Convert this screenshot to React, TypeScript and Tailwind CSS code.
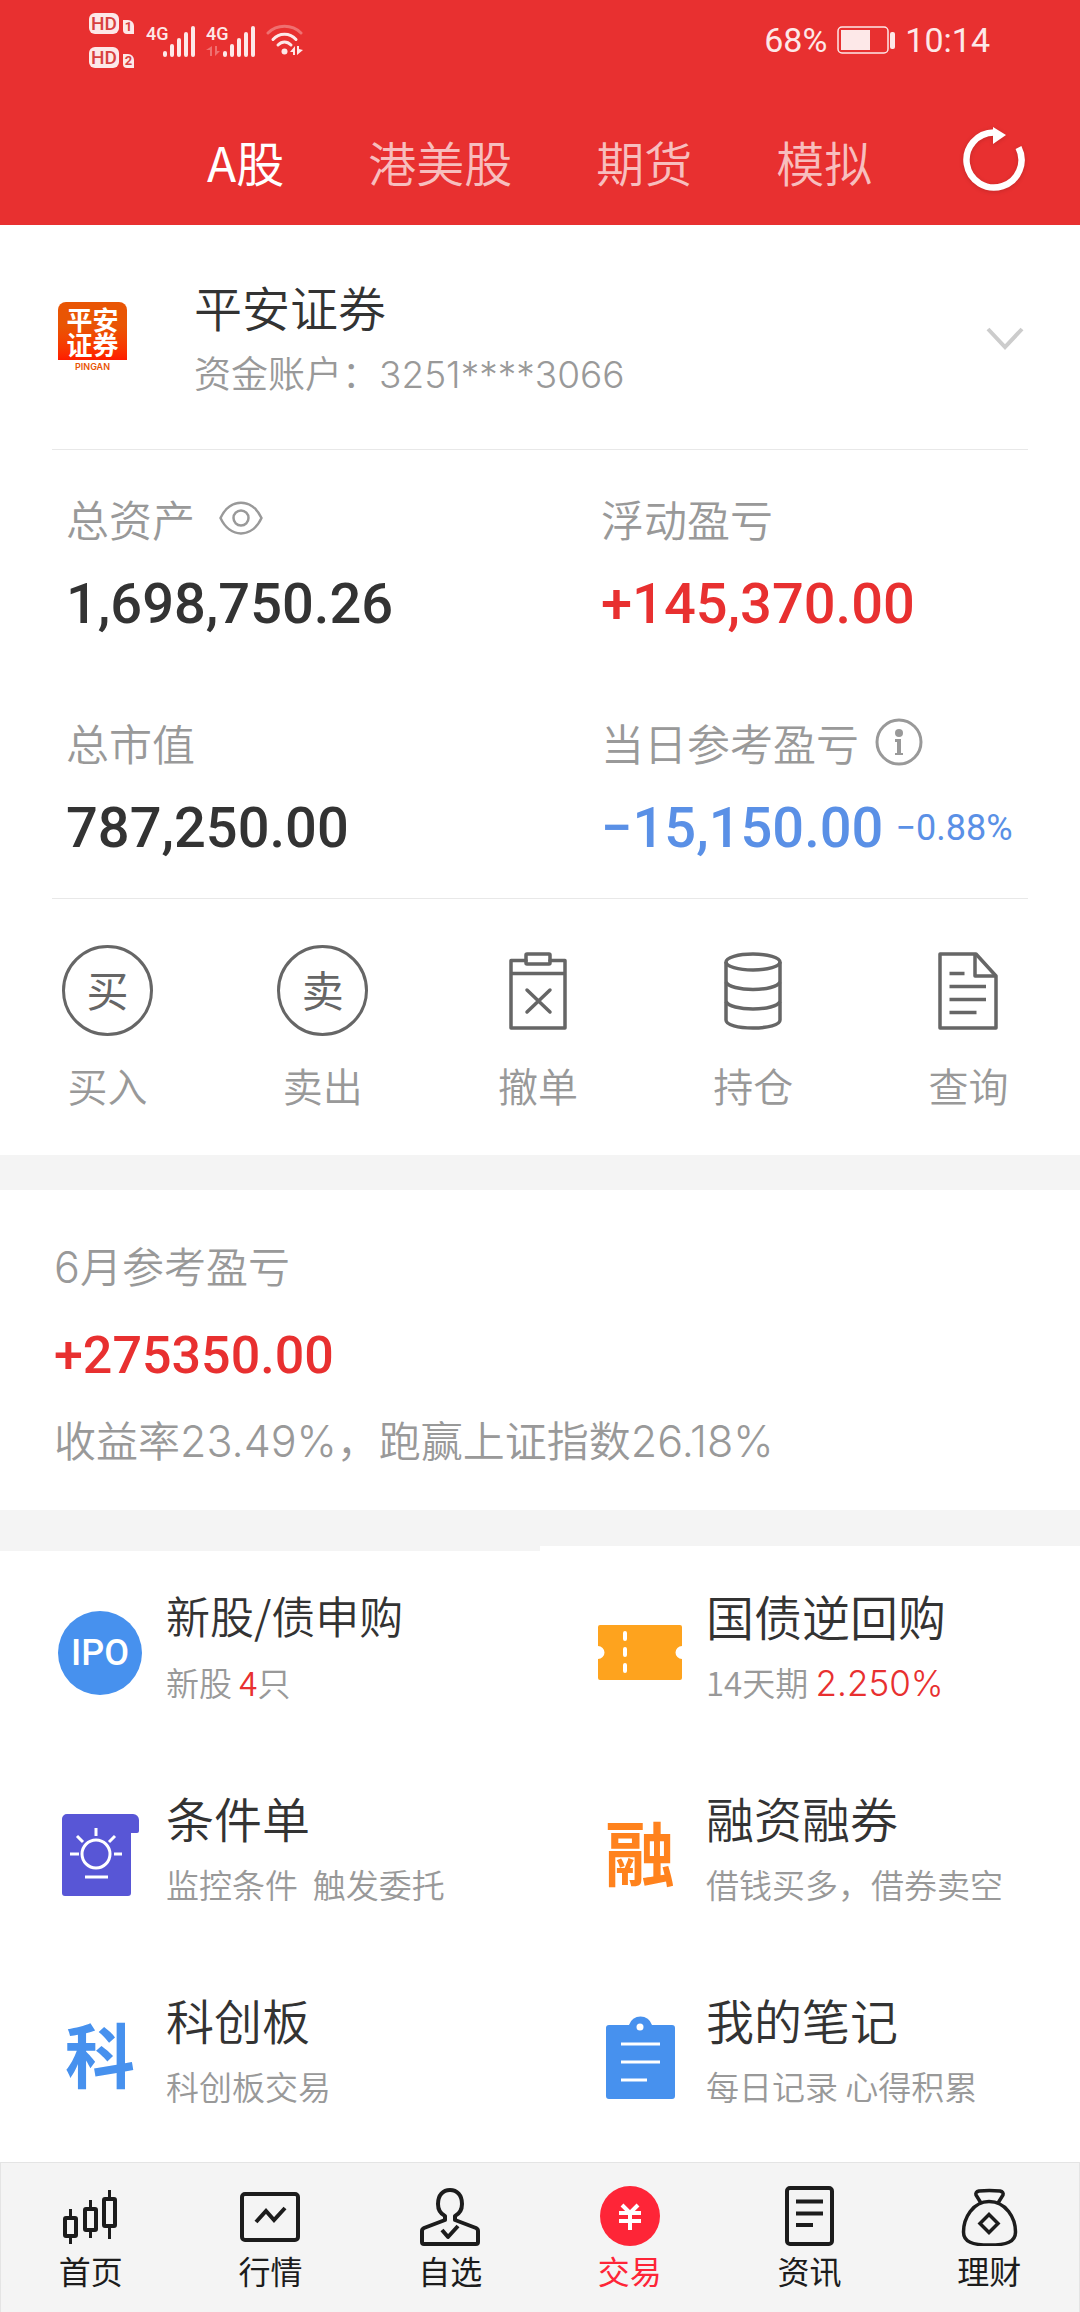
import type { ReactNode } from "react";

const quickActions: { label: string; icon: ReactNode }[] = [
  { label: "买入", icon: <CircleIcon char="买" /> },
  { label: "卖出", icon: <CircleIcon char="卖" /> },
  { label: "撤单", icon: <CancelIcon /> },
  { label: "持仓", icon: <PositionIcon /> },
  { label: "查询", icon: <QueryIcon /> },
];

const navItems: { label: string; icon: ReactNode; active?: boolean }[] = [
  { label: "首页", icon: <CandlesIcon /> },
  { label: "行情", icon: <QuoteIcon /> },
  { label: "自选", icon: <PersonIcon /> },
  { label: "交易", icon: <TradeIcon />, active: true },
  { label: "资讯", icon: <NewsIcon /> },
  { label: "理财", icon: <BagIcon /> },
];

/* Status bar */

function HdBadge({ sim }: { sim: string }) {
  return (
    <div className="flex items-end gap-1">
      <span className="flex h-[21px] w-[30px] items-center justify-center rounded-md bg-[#fde8e8] font-[Roboto] text-[19px] leading-none font-medium text-[#d8403f]">
        HD
      </span>
      <span className="flex h-[14px] w-[11px] items-center justify-center rounded-tr-md rounded-bl-sm bg-[#fde8e8] font-[Roboto] text-[13px] leading-none font-bold text-[#d8403f]">
        {sim}
      </span>
    </div>
  );
}

function Signal({ arrows }: { arrows?: boolean }) {
  return (
    <svg width="52" height="34" viewBox="0 0 52 34" fill="#fde8e8">
      <text x="0" y="17" fontFamily="Roboto" fontSize="18" fontWeight="500">
        4G
      </text>
      {arrows && <path d="M6 23v10H4v-6H0zM9 23v10l5-5h-3v-5z" opacity="0.35" />}
      <rect x="17" y="28" width="4" height="6" rx="2" />
      <rect x="24" y="21" width="4" height="13" rx="2" />
      <rect x="31" y="15" width="4" height="19" rx="2" />
      <rect x="38" y="9" width="4" height="25" rx="2" />
      <rect x="45" y="3" width="4" height="31" rx="2" />
    </svg>
  );
}

function WifiIcon() {
  return (
    <svg width="38" height="32" viewBox="0 0 38 32" fill="none" stroke="#fde8e8" strokeWidth="3" strokeLinecap="round">
      <path d="M2 9C11 0 26 0 35 9" opacity="0.35" />
      <path d="M7 15.5c6-7 17-7 23 0" />
      <path d="M12 21c4-4 9-4 13 0" />
      <circle cx="18.5" cy="27.5" r="3" fill="#fde8e8" stroke="none" />
      <path d="M29 22v9h-2v-3h-3zM31 22v9l6-5-4-1v-3z" fill="#fde8e8" stroke="none" />
    </svg>
  );
}

function BatteryIcon() {
  return (
    <svg width="58" height="28" viewBox="0 0 58 28" fill="#fde8e8">
      <rect x="1" y="1" width="50" height="26" rx="4" fill="none" stroke="#fde8e8" strokeWidth="1.5" />
      <rect x="4" y="4" width="29" height="20" />
      <rect x="53" y="6" width="5" height="17" rx="2" />
    </svg>
  );
}

function StatusBar() {
  return (
    <div className="flex h-20 items-center pr-[90px] pl-[89px] text-[#fde8e8]">
      <div className="flex flex-col gap-[13px]">
        <HdBadge sim="1" />
        <HdBadge sim="2" />
      </div>
      <div className="ml-3 flex items-center gap-2">
        <Signal />
        <Signal arrows />
        <WifiIcon />
      </div>
      <div className="ml-auto flex items-center gap-[10px] font-[Roboto] text-[34px] font-normal">
        <span>68%</span>
        <BatteryIcon />
        <span>10:14</span>
      </div>
    </div>
  );
}

/* Small icons */

function RefreshIcon() {
  return (
    <svg width="68" height="72" viewBox="0 3 68 72" className="drop-shadow-sm">
      <path d="M34 10.5A27.5 27.5 0 1 0 58.5 25.5" fill="none" stroke="#fff" strokeWidth="6.5" />
      <path d="M33 5l13 8-13 9z" fill="#fff" />
    </svg>
  );
}

function BrokerLogo() {
  return (
    <div className="flex w-[69px] shrink-0 flex-col items-center pb-1">
      <div className="flex h-[58px] w-full items-center justify-center rounded-t-lg bg-linear-to-b from-[#e95504] from-40% to-[#ff1a00] text-center text-[26px] leading-[25px] font-bold text-white">
        平安
        <br />
        证券
      </div>
      <span className="pt-[2px] font-[Inter] text-[9px] leading-[10px] font-semibold text-[#e95504]">PINGAN</span>
    </div>
  );
}

function EyeIcon() {
  return (
    <svg width="44" height="34" viewBox="0 0 44 34" fill="none" stroke="#999" strokeWidth="2.5">
      <path d="M1.5 17C11-3.5 33-3.5 42.5 17 33 37.5 11 37.5 1.5 17z" strokeLinejoin="round" />
      <circle cx="22" cy="17" r="7.5" />
    </svg>
  );
}

function InfoIcon() {
  return (
    <svg width="48" height="48" viewBox="0 0 48 48">
      <circle cx="24" cy="24" r="22" fill="none" stroke="#999" strokeWidth="3" />
      <circle cx="24" cy="15" r="4" fill="#999" />
      <path d="M20 21h6v14h2v2h-8v-2h2V24h-2z" fill="#999" />
    </svg>
  );
}

/* Action icons */

function CircleIcon({ char }: { char: string }) {
  return (
    <span className="flex size-[91px] items-center justify-center rounded-full border-[3px] border-[#666] pb-1 text-[42px] leading-none font-normal text-[#666]">
      {char}
    </span>
  );
}

function CancelIcon() {
  return (
    <svg width="58" height="78" viewBox="0 0 58 78" fill="none" stroke="#666" strokeWidth="3.5" strokeLinejoin="round" strokeLinecap="round">
      <path d="M17 8.5H2v67.5h54V8.5H41M2 21.5h54" />
      <rect x="17" y="2" width="24" height="10" rx="1" />
      <path d="M18 38l23 22M41 38L18 60" />
    </svg>
  );
}

function PositionIcon() {
  return (
    <svg width="58" height="78" viewBox="0 0 58 78" fill="none" stroke="#666" strokeWidth="3.5">
      <ellipse cx="29" cy="10" rx="27" ry="8" />
      <path d="M2 10v58c0 5 12 8 27 8s27-3 27-8V10" />
      <path d="M2 30c2 4.5 14 7.5 27 7.5S54 34.5 56 30M2 49.5C4 54 16 57 29 57s25-3 27-7.5" />
    </svg>
  );
}

function QueryIcon() {
  return (
    <svg width="60" height="78" viewBox="0 0 60 78" fill="none" stroke="#666" strokeWidth="3.5" strokeLinejoin="round">
      <path d="M2 2h36l20 22v52H2z" />
      <path d="M37 2v22h21" />
      <path d="M11.5 21.5h15M11.5 34.5H48M11.5 47.5H48M11.5 60.5h27" />
    </svg>
  );
}

/* Feature icons */

function IpoIcon() {
  return (
    <span className="flex size-[84px] items-center justify-center rounded-full bg-[#4791ee] font-[Roboto] text-[36px] font-medium text-white">
      IPO
    </span>
  );
}

function TicketIcon() {
  return (
    <svg width="84" height="84" viewBox="0 0 84 84">
      <path d="M2 14h80a2 2 0 0 1 2 2v19a6.5 6.5 0 0 0 0 13v19a2 2 0 0 1-2 2H2a2 2 0 0 1-2-2V48a6.5 6.5 0 0 0 0-13V16a2 2 0 0 1 2-2z" fill="#fea31e" />
      <path d="M27 22v6M27 38v6M27 54v6" stroke="#fff" strokeWidth="4" strokeLinecap="round" />
    </svg>
  );
}

function ConditionIcon() {
  return (
    <svg width="84" height="84" viewBox="0 0 84 84">
      <path d="M9 1h66a6 6 0 0 1 6 6v11a2 2 0 0 1-2 2h-6v60a3 3 0 0 1-3 3H7a3 3 0 0 1-3-3V6a5 5 0 0 1 5-5z" fill="#5856d6" />
      <g fill="none" stroke="#fff" strokeWidth="3">
        <circle cx="38" cy="41" r="14" />
        <path d="M38 15v8M12 41h9M56 41h8M19 23l6 6M57 23l-6 6M27 64h23" />
      </g>
    </svg>
  );
}

function CharIcon({ char, color }: { char: string; color: string }) {
  return (
    <span className={`flex size-[84px] items-center justify-center pb-2 text-[70px] leading-none font-bold ${color}`}>
      {char}
    </span>
  );
}

function NotesIcon() {
  return (
    <svg width="84" height="84" viewBox="0 0 84 84">
      <path d="M11 10h20a12 12 0 0 1 23 0h20a3 3 0 0 1 3 3v68a3 3 0 0 1-3 3H11a3 3 0 0 1-3-3V13a3 3 0 0 1 3-3z" fill="#4791ee" />
      <circle cx="42" cy="12" r="3.5" fill="#fff" />
      <path d="M23 29h39M23 47h39M23 65h26" stroke="#fff" strokeWidth="3" />
    </svg>
  );
}

/* Bottom bar icons */

function CandlesIcon() {
  return (
    <svg width="60" height="60" viewBox="0 0 60 60" fill="none" stroke="#1c1c1c" strokeWidth="4">
      <rect x="4" y="32" width="11" height="18" rx="1" />
      <rect x="24" y="23" width="11" height="21" rx="1" />
      <rect x="43" y="13" width="11" height="27" rx="1" />
      <path d="M9.5 23v8M9.5 50v8M29.5 14v8M29.5 44v8M48.5 4v9M48.5 40v13" strokeWidth="3" />
    </svg>
  );
}

function QuoteIcon() {
  return (
    <svg width="60" height="60" viewBox="0 0 60 60" fill="none" stroke="#1c1c1c" strokeWidth="4">
      <rect x="2" y="8" width="56" height="46" rx="3" />
      <path d="M16 36l10-11 8 9 11-12" />
    </svg>
  );
}

function PersonIcon() {
  return (
    <svg width="60" height="60" viewBox="0 0 60 60" fill="none" stroke="#1c1c1c" strokeWidth="4" strokeLinejoin="round">
      <path d="M25 34v-4c-4-2-7-6-7-12 0-9 5-14 12-14s12 5 12 14c0 6-3 10-7 12v4l21 8q2 1 2 3v11q0 2-2 2H4q-2 0-2-2V45q0-2 2-3z" />
      <path d="M22 44l6 7 10-11" />
    </svg>
  );
}

function TradeIcon() {
  return (
    <svg width="60" height="60" viewBox="0 0 60 60">
      <circle cx="30" cy="30" r="30" fill="#fe2537" />
      <path d="M22 19l8 8 8-8M19 27h22M19 35h22M30 26v18" fill="none" stroke="#fff" strokeWidth="4" />
    </svg>
  );
}

function NewsIcon() {
  return (
    <svg width="60" height="60" viewBox="0 0 60 60" fill="none" stroke="#1c1c1c" strokeWidth="4">
      <rect x="8" y="2" width="45" height="56" rx="3" />
      <path d="M17 15.5h27M17 27.5h27M17 39h17" />
    </svg>
  );
}

function BagIcon() {
  return (
    <svg width="60" height="60" viewBox="0 0 60 60" fill="none" stroke="#1c1c1c" strokeWidth="3.5">
      <path d="M22 17l-5-8q-1-3 3-4 10-1 21 0 4 1 3 4l-5 8" />
      <path d="M30 15.5C14 15.5 4.5 32 4.5 46c0 10 9 13 26 13s26-3 26-13C56.5 32 47 15.5 30 15.5z" />
      <path d="M30 28.5l9 9-9 9-9-9z" />
    </svg>
  );
}

/* Sections */

function Stat({ label, icon, children }: { label: string; icon?: ReactNode; children: ReactNode }) {
  return (
    <div>
      <div className="flex h-[72px] items-center gap-4 text-[43px] text-[#999]">
        {label}
        {icon}
      </div>
      <div className="flex h-[100px] items-center font-[Roboto] text-[56px] font-medium">{children}</div>
    </div>
  );
}

function Feature({ icon, title, small, children }: { icon: ReactNode; title: string; small?: boolean; children: ReactNode }) {
  return (
    <a href="#" className="flex items-center gap-6">
      <span className="mt-2 shrink-0">{icon}</span>
      <span className="whitespace-pre">
        <span className={`block leading-[67px] text-[#333] ${small ? "text-[44px]" : "text-[48px]"}`}>{title}</span>
        <span className="block text-[33px] leading-[67px] text-[#999]">{children}</span>
      </span>
    </a>
  );
}

export default function App() {
  return (
    <div className="flex min-h-screen flex-col bg-[#f4f4f4] font-['Noto_Sans_CJK_SC',sans-serif] font-[350] text-[#333]">
      <header className="bg-[#e83030]">
        <StatusBar />
        <div className="flex h-[145px] items-center gap-[84px] pt-4 pr-[52px] pl-[207px] text-[48px] text-white/70">
          <button className="font-normal text-white">A股</button>
          <button>港美股</button>
          <button>期货</button>
          <button>模拟</button>
          <button aria-label="刷新" className="ml-auto">
            <RefreshIcon />
          </button>
        </div>
      </header>

      {/* Account */}
      <section className="bg-white">
        <div className="mx-[52px] flex items-center border-b border-[#e8e8e8] pt-12 pr-1 pb-11 pl-[6px]">
          <BrokerLogo />
          <div className="ml-[67px]">
            <h1 className="text-[48px] leading-[66px]">平安证券</h1>
            <p className="text-[37px] leading-[66px] text-[#999]">
              资金账户：<span className="font-[Inter] leading-none font-light">3251****3066</span>
            </p>
          </div>
          <button aria-label="展开" className="ml-auto">
            <svg width="38" height="24" viewBox="0 0 38 24" fill="none" stroke="#ccc" strokeWidth="4">
              <path d="M2 2l17 18L36 2" />
            </svg>
          </button>
        </div>

        <div className="mx-[52px] grid grid-cols-2 gap-y-[52px] border-b border-[#e8e8e8] pt-8 pb-5">
          <div className="pl-[14px]">
            <Stat
              label="总资产"
              icon={
                <button aria-label="隐藏金额" className="ml-2">
                  <EyeIcon />
                </button>
              }
            >
              1,698,750.26
            </Stat>
          </div>
          <div className="pl-[61px]">
            <Stat label="浮动盈亏">
              <span className="text-[#e83030]">+145,370.00</span>
            </Stat>
          </div>
          <div className="pl-[14px]">
            <Stat label="总市值">787,250.00</Stat>
          </div>
          <div className="pl-[61px]">
            <Stat
              label="当日参考盈亏"
              icon={
                <button aria-label="说明">
                  <InfoIcon />
                </button>
              }
            >
              <span className="text-[#5a90e6]">−15,150.00</span>
              <span className="ml-3 text-[36px] font-normal text-[#5a90e6]">−0.88%</span>
            </Stat>
          </div>
        </div>

        <div className="grid grid-cols-5 pt-[46px] pr-1 pb-10">
          {quickActions.map((item) => (
            <button key={item.label} className="flex flex-col items-center gap-5">
              <span className="flex h-[91px] items-center">{item.icon}</span>
              <span className="text-[40px] leading-[59px] text-[#999]">{item.label}</span>
            </button>
          ))}
        </div>
      </section>

      {/* Monthly profit */}
      <section className="mt-[35px] bg-white px-[54px] pt-[31px] pb-7 text-[42px] leading-[87px] text-[#999]">
        <h2>
          <span className="font-[Inter] text-[43px] leading-none font-light">6</span>月参考盈亏
        </h2>
        <p className="pt-2 font-[Roboto] text-[52px] leading-[79px] font-medium text-[#e83030]">+275350.00</p>
        <p>
          收益率<span className="font-[Inter] text-[43px] leading-none font-light">23.49%</span>，跑赢上证指数
          <span className="font-[Inter] text-[43px] leading-none font-light">26.18%</span>
        </p>
      </section>

      {/* Features */}
      <section className="mt-9 grid flex-1 grid-cols-2">
        <div className="mt-[5px] flex flex-col gap-[68px] bg-white pt-[31px] pl-[58px]">
          <Feature icon={<IpoIcon />} title="新股/债申购" small>
            新股 <span className="text-[#e83030]">4</span>只
          </Feature>
          <Feature icon={<ConditionIcon />} title="条件单">
            {"监控条件  触发委托"}
          </Feature>
          <Feature icon={<CharIcon char="科" color="text-[#4791ee]" />} title="科创板">
            科创板交易
          </Feature>
        </div>
        <div className="flex flex-col gap-[68px] bg-white pt-9 pb-10 pl-[58px]">
          <Feature icon={<TicketIcon />} title="国债逆回购">
            14天期 <span className="font-[Inter] text-[35px] leading-none font-light text-[#e83030]">2.250%</span>
          </Feature>
          <Feature icon={<CharIcon char="融" color="text-[#ff821d]" />} title="融资融券">
            借钱买多，借券卖空
          </Feature>
          <Feature icon={<NotesIcon />} title="我的笔记">
            每日记录 心得积累
          </Feature>
        </div>
      </section>

      <nav className="grid grid-cols-6 border border-b-0 border-[#e4e4e4] pt-[23px] pb-[18px]">
        {navItems.map((item) => (
          <a
            key={item.label}
            href="#"
            className={`flex flex-col items-center text-[32px] leading-[48px] font-normal ${item.active ? "text-[#fe2537]" : "text-[#1c1c1c]"}`}
          >
            {item.icon}
            {item.label}
          </a>
        ))}
      </nav>
    </div>
  );
}
